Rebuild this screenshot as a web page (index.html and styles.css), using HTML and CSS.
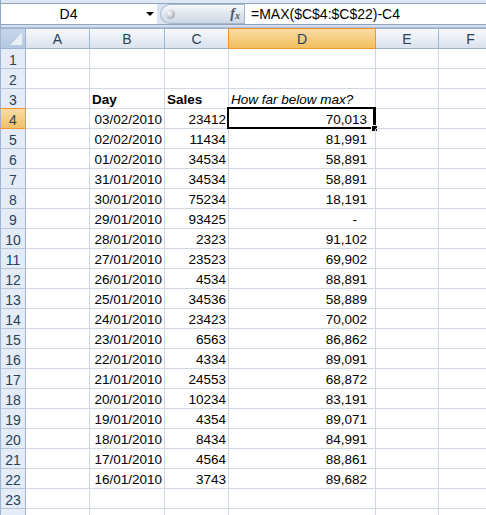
FILE: index.html
```html
<!DOCTYPE html>
<html>
<head>
<meta charset="utf-8">
<link rel="stylesheet" href="styles.css">
</head>
<body>
<div class="topbar">
  <div class="fbar">
    <div class="namebox"><span class="nb-text">D4</span><span class="nb-arrow"></span></div>
    <div class="fxzone">
      <div class="pill"><span class="knob"></span><span class="fx">f<sub>x</sub></span></div>
    </div>
    <div class="formula">=MAX($C$4:$C$22)-C4</div>
  </div>
</div>
<div class="sheet" id="sheet">
  <div class="corner"><span class="tri"></span></div>
  <div class="ch">A</div><div class="ch">B</div><div class="ch">C</div><div class="ch sel">D</div><div class="ch">E</div><div class="ch">F</div>

  <div class="rh">1</div><div class="c"></div><div class="c"></div><div class="c"></div><div class="c"></div><div class="c"></div><div class="c"></div>
  <div class="rh">2</div><div class="c"></div><div class="c"></div><div class="c"></div><div class="c"></div><div class="c"></div><div class="c"></div>
  <div class="rh">3</div><div class="c"></div><div class="c b">Day</div><div class="c b">Sales</div><div class="c i">How far below max?</div><div class="c"></div><div class="c"></div>
  <div class="rh sel">4</div><div class="c"></div><div class="c n">03/02/2010</div><div class="c n">23412</div><div class="c acc active">70,013<span class="selbox"><span class="handle"></span></span></div><div class="c"></div><div class="c"></div>
  <div class="rh">5</div><div class="c"></div><div class="c n">02/02/2010</div><div class="c n">11434</div><div class="c acc">81,991</div><div class="c"></div><div class="c"></div>
  <div class="rh">6</div><div class="c"></div><div class="c n">01/02/2010</div><div class="c n">34534</div><div class="c acc">58,891</div><div class="c"></div><div class="c"></div>
  <div class="rh">7</div><div class="c"></div><div class="c n">31/01/2010</div><div class="c n">34534</div><div class="c acc">58,891</div><div class="c"></div><div class="c"></div>
  <div class="rh">8</div><div class="c"></div><div class="c n">30/01/2010</div><div class="c n">75234</div><div class="c acc">18,191</div><div class="c"></div><div class="c"></div>
  <div class="rh">9</div><div class="c"></div><div class="c n">29/01/2010</div><div class="c n">93425</div><div class="c acc dash">-</div><div class="c"></div><div class="c"></div>
  <div class="rh">10</div><div class="c"></div><div class="c n">28/01/2010</div><div class="c n">2323</div><div class="c acc">91,102</div><div class="c"></div><div class="c"></div>
  <div class="rh">11</div><div class="c"></div><div class="c n">27/01/2010</div><div class="c n">23523</div><div class="c acc">69,902</div><div class="c"></div><div class="c"></div>
  <div class="rh">12</div><div class="c"></div><div class="c n">26/01/2010</div><div class="c n">4534</div><div class="c acc">88,891</div><div class="c"></div><div class="c"></div>
  <div class="rh">13</div><div class="c"></div><div class="c n">25/01/2010</div><div class="c n">34536</div><div class="c acc">58,889</div><div class="c"></div><div class="c"></div>
  <div class="rh">14</div><div class="c"></div><div class="c n">24/01/2010</div><div class="c n">23423</div><div class="c acc">70,002</div><div class="c"></div><div class="c"></div>
  <div class="rh">15</div><div class="c"></div><div class="c n">23/01/2010</div><div class="c n">6563</div><div class="c acc">86,862</div><div class="c"></div><div class="c"></div>
  <div class="rh">16</div><div class="c"></div><div class="c n">22/01/2010</div><div class="c n">4334</div><div class="c acc">89,091</div><div class="c"></div><div class="c"></div>
  <div class="rh">17</div><div class="c"></div><div class="c n">21/01/2010</div><div class="c n">24553</div><div class="c acc">68,872</div><div class="c"></div><div class="c"></div>
  <div class="rh">18</div><div class="c"></div><div class="c n">20/01/2010</div><div class="c n">10234</div><div class="c acc">83,191</div><div class="c"></div><div class="c"></div>
  <div class="rh">19</div><div class="c"></div><div class="c n">19/01/2010</div><div class="c n">4354</div><div class="c acc">89,071</div><div class="c"></div><div class="c"></div>
  <div class="rh">20</div><div class="c"></div><div class="c n">18/01/2010</div><div class="c n">8434</div><div class="c acc">84,991</div><div class="c"></div><div class="c"></div>
  <div class="rh">21</div><div class="c"></div><div class="c n">17/01/2010</div><div class="c n">4564</div><div class="c acc">88,861</div><div class="c"></div><div class="c"></div>
  <div class="rh">22</div><div class="c"></div><div class="c n">16/01/2010</div><div class="c n">3743</div><div class="c acc">89,682</div><div class="c"></div><div class="c"></div>
  <div class="rh">23</div><div class="c"></div><div class="c"></div><div class="c"></div><div class="c"></div><div class="c"></div><div class="c"></div>
  <div class="rh"></div><div class="c"></div><div class="c"></div><div class="c"></div><div class="c"></div><div class="c"></div><div class="c"></div>
</div>
</body>
</html>
```

FILE: styles.css
```css
html, body {
  margin: 0;
  padding: 0;
  width: 486px;
  height: 515px;
  overflow: hidden;
  background: #ffffff;
  font-family: "Liberation Sans", Arial, sans-serif;
}

.topbar {
  background: linear-gradient(#dfe9f5, #d3dfee);
  border-bottom: 1px solid #a9bcd4;
  border-left: 1px solid #8ea6c4;
  box-sizing: border-box;
  height: 28px;
  padding-top: 3px;
}

.fbar {
  display: flex;
  height: 20px;
  border-top: 1px solid #8da3bf;
  border-bottom: 1px solid #8da3bf;
  background: #ffffff;
}

.namebox {
  width: 156px;
  display: flex;
  align-items: center;
  position: relative;
  background: #ffffff;
}

.nb-text {
  flex: 1;
  text-align: center;
  font-size: 14px;
  color: #000;
  margin-right: 10px;
}

.nb-arrow {
  width: 0;
  height: 0;
  border-left: 4px solid transparent;
  border-right: 4px solid transparent;
  border-top: 4px solid #000;
  margin-right: 3px;
}

.fxzone {
  width: 87px;
  background: #dbe5f2;
  display: flex;
  align-items: stretch;
  padding-left: 3px;
  box-sizing: border-box;
}

.pill {
  flex: 1;
  display: flex;
  align-items: center;
  justify-content: space-between;
  border: 1px solid #a7b8cc;
  border-right: none;
  border-radius: 10px 0 0 10px;
  background: linear-gradient(#f6f8fb, #dfe6ef 50%, #cdd8e5);
  padding: 0 4px 0 5px;
}

.knob {
  width: 9px;
  height: 9px;
  border-radius: 50%;
  background: radial-gradient(circle at 35% 35%, #ffffff, #b8bcc2 60%, #8e949c);
}

.fx {
  font-family: "Liberation Serif", "Times New Roman", serif;
  font-style: italic;
  font-weight: bold;
  font-size: 14px;
  color: #4f545b;
  line-height: 1;
}

.fx sub {
  font-size: 10px;
  vertical-align: -1px;
}

.formula {
  flex: 1;
  display: flex;
  align-items: center;
  padding-left: 6px;
  font-size: 14px;
  color: #000;
  border-left: 1px solid #a7b8cc;
}

.sheet {
  display: grid;
  grid-template-columns: 26px 64px 75px 64px 147px 63px 64px;
  grid-auto-rows: 20px;
  grid-template-rows: 21px;
  width: 503px;
}

.corner {
  background: linear-gradient(#c7d6ea, #b4c8e3);
  border: 1px solid #9db3cf;
  box-sizing: border-box;
  position: relative;
}

.tri {
  position: absolute;
  right: 3px;
  bottom: 3px;
  width: 0;
  height: 0;
  border-left: 12px solid transparent;
  border-bottom: 12px solid #eaf0f8;
}

.ch {
  background: linear-gradient(#f8f9fc, #e9eef5 50%, #dae2ed);
  border-top: 1px solid #9db3cf;
  border-right: 1px solid #9db3cf;
  border-bottom: 1px solid #9db3cf;
  box-sizing: border-box;
  display: flex;
  align-items: center;
  justify-content: center;
  font-size: 14px;
  color: #27415a;
  padding-top: 1px;
}

.ch.sel {
  background: linear-gradient(#f9dca6, #f6cd82 50%, #f1bf5e);
  border-color: #f29436;
  border-left: 1px solid #f29436;
  margin-left: -1px;
}

.rh {
  background: #e4ecf7;
  border-right: 1px solid #9db3cf;
  border-bottom: 1px solid #b6c7dc;
  border-left: 1px solid #9db3cf;
  box-sizing: border-box;
  display: flex;
  align-items: center;
  justify-content: center;
  font-size: 14px;
  color: #27415a;
  padding-top: 2px;
}

.rh.sel {
  background: linear-gradient(#f9dca6, #f1c169);
  border-right: 1px solid #f29436;
  border-bottom: 1px solid #f29436;
  border-top: 1px solid #f29436;
  margin-top: -1px;
}

.c {
  border-right: 1px solid #d0d7e5;
  border-bottom: 1px solid #d0d7e5;
  box-sizing: border-box;
  font-size: 13.5px;
  color: #000;
  display: flex;
  align-items: flex-end;
  padding: 0 2px 1px 2px;
  white-space: nowrap;
  overflow: visible;
  position: relative;
}

.c.b {
  font-weight: bold;
}

.c.i {
  font-style: italic;
}

.c.n {
  justify-content: flex-end;
}

.c.acc {
  justify-content: flex-end;
  padding-right: 8px;
}

.c.acc.dash {
  padding-right: 18px;
}

.selbox {
  position: absolute;
  left: -2px;
  top: -2px;
  right: -1px;
  bottom: -1px;
  border: 2px solid #000;
  border-right-width: 3px;
}

.handle {
  position: absolute;
  right: -5px;
  bottom: -5px;
  width: 5px;
  height: 5px;
  background: #000;
  border: 1px solid #fff;
}
```
